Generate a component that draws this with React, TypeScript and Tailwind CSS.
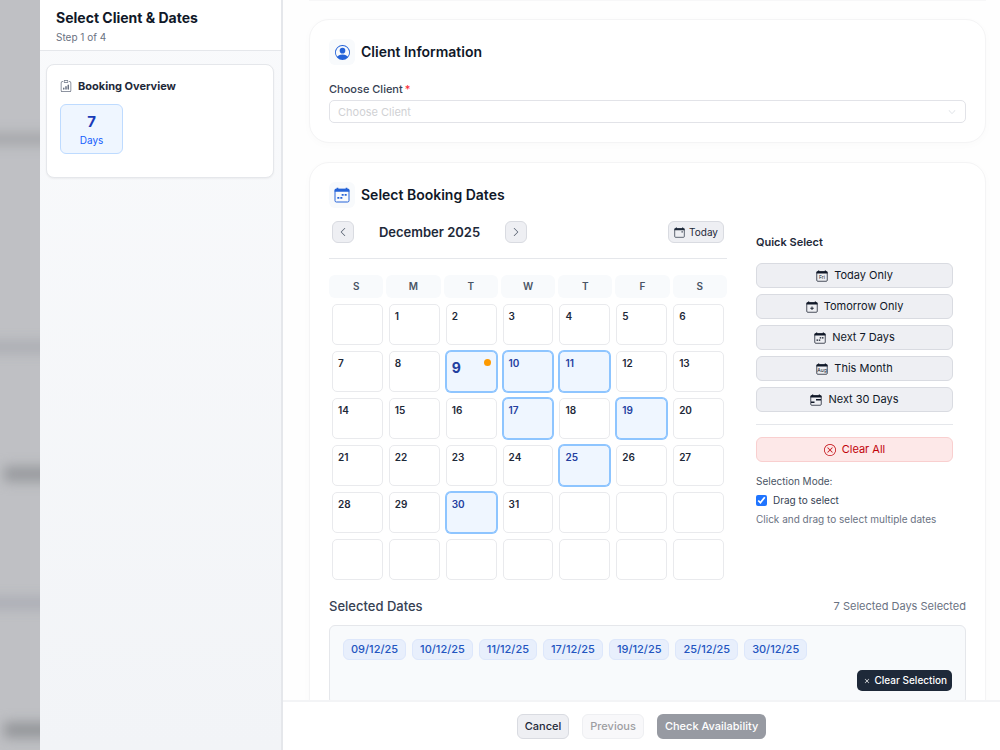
import React from "react";
import { BsPersonCircle, BsClipboardData, BsXCircle, BsChevronLeft, BsChevronRight, BsChevronDown, BsX } from "react-icons/bs";

type CalendarKind = "plain" | "range" | "plus" | "fri" | "aug" | "span";

function CalendarIcon({ kind, className }: { kind: CalendarKind; className?: string }) {
  return (
    <svg viewBox="0 0 24 24" className={className} fill="none" stroke="currentColor" strokeWidth="1.5" aria-hidden="true">
      <rect x="1.5" y="3.5" width="21" height="19" rx="2" />
      <path d="M1 4q0-1.5 1.5-1.5H4V1h2.5v1.5h11V1H20v1.5h1.5Q23 2.5 23 4v3H1z" fill="currentColor" stroke="none" />
      {kind === "plain" && <path d="M16.5 9.5h2.5v2.5h-2.5z" fill="currentColor" stroke="none" />}
      {kind === "range" && (
        <path d="M5 15h3v2.6H5zM9.5 15h3v2.6h-3zM11.5 10.5h3v2.6h-3zM16 10.5h3v2.6h-3z" fill="currentColor" stroke="none" />
      )}
      {kind === "plus" && <path d="M12 11v7M8.5 14.5h7" strokeWidth="1.8" />}
      {kind === "span" && <path d="M2 16.5h7M12 11.5h10" strokeWidth="2.6" />}
      {kind === "fri" && (
        <text x="12" y="18.5" textAnchor="middle" fontSize="10" fontFamily="Inter, sans-serif" fill="currentColor" stroke="none">Fri</text>
      )}
      {kind === "aug" && (
        <text x="12" y="18" textAnchor="middle" fontSize="10" fontFamily="Inter, sans-serif" fill="currentColor" stroke="none">Aug</text>
      )}
    </svg>
  );
}

const weekdays = ["S", "M", "T", "W", "T", "F", "S"];
const cells: (number | null)[] = Array.from({ length: 42 }, (_, i) => (i >= 1 && i <= 31 ? i : null));
const selected = new Set([9, 10, 11, 17, 19, 25, 30]);
const today = 9;

const quickOptions: { label: string; kind: CalendarKind }[] = [
  { label: "Today Only", kind: "fri" },
  { label: "Tomorrow Only", kind: "plus" },
  { label: "Next 7 Days", kind: "range" },
  { label: "This Month", kind: "aug" },
  { label: "Next 30 Days", kind: "span" },
];

function Backdrop() {
  return (
    <div className="relative w-10 shrink-0 overflow-hidden bg-[#bfc0c4]" aria-hidden="true">
      <div className="absolute -left-4 top-[133px] h-3 w-20 bg-[#a5a6aa] blur-[6px]" />
      <div className="absolute -left-4 top-[341px] h-3 w-20 bg-[#abadb3] blur-[6px]" />
      <div className="absolute left-1 top-[466px] h-4 w-16 bg-[#999b9f] blur-[6px]" />
      <div className="absolute -left-4 top-[597px] h-3 w-20 bg-[#abadb5] blur-[6px]" />
      <div className="absolute left-1 top-[722px] h-4 w-16 bg-[#95979b] blur-[6px]" />
    </div>
  );
}

function Sidebar() {
  return (
    <aside className="flex w-[243px] shrink-0 flex-col border-r-2 border-gray-200 bg-linear-to-b from-[#f9fafc] to-[#f2f4f7]">
      <header className="border-b border-gray-200 bg-white px-4 pt-2 pb-[5px]">
        <h1 className="text-[14px] leading-5 font-bold text-gray-900">Select Client &amp; Dates</h1>
        <p className="mt-px text-[10px] leading-4 text-gray-500">Step 1 of 4</p>
      </header>
      <section className="mr-[7px] ml-1.5 mt-[13px] rounded-lg border border-gray-200 bg-white px-[13px] pt-3 pb-[23px] shadow-xs">
        <h2 className="flex h-[18px] items-center gap-1.5 text-[11px] font-bold text-gray-800">
          <BsClipboardData className="size-3 text-gray-500" />
          Booking Overview
        </h2>
        <div className="mt-[9px] flex h-[50px] w-[63px] flex-col items-center justify-center rounded-md border border-blue-200 bg-blue-50 pt-px">
          <span className="text-[15px] leading-5 font-bold text-blue-800">7</span>
          <span className="text-[10px] leading-4 text-blue-600">Days</span>
        </div>
      </section>
    </aside>
  );
}

function CardTitle({ icon, children }: { icon: React.ReactNode; children: React.ReactNode }) {
  return (
    <h2 className="flex items-center gap-1.5 text-[14px] leading-5 font-semibold text-gray-900">
      <span className="flex size-[26px] items-center justify-center rounded-md bg-slate-50 text-[#2563d8]">{icon}</span>
      {children}
    </h2>
  );
}

const card = "rounded-[20px] border border-[#f4f4f5] bg-white px-[19px] pt-[19px] shadow-[0_2px_8px_rgba(0,0,0,0.02)]";
const softButton = "flex items-center justify-center rounded-md border border-[#d9dbe1] bg-[#eeeff3]";

function ClientCard() {
  return (
    <section className={`${card} pb-[19px]`}>
      <CardTitle icon={<BsPersonCircle className="size-[15px]" />}>Client Information</CardTitle>
      <label htmlFor="client" className="mt-4 block text-[11px] leading-4 font-medium text-gray-700">
        Choose Client<span className="ml-0.5 text-red-500">*</span>
      </label>
      <div className="relative mt-[3px]">
        <select id="client" defaultValue="" className="block h-[23px] w-full appearance-none rounded-[5px] border border-[#e2e3e8] bg-white px-2 text-[11px] leading-4 text-[#d0d1d4]">
          <option value="">Choose Client</option>
        </select>
        <BsChevronDown className="pointer-events-none absolute top-2 right-2.5 size-2 text-gray-300" />
      </div>
    </section>
  );
}

function Calendar() {
  return (
    <div className="min-w-0 flex-1">
      <div className="flex h-[45px] items-start justify-between border-b border-gray-200 px-[3px] pt-[7px]">
        <div className="flex items-center">
          <button type="button" aria-label="Previous month" className={`${softButton} size-[22px] text-gray-600`}>
            <BsChevronLeft className="size-2.5" />
          </button>
          <span className="w-[151px] text-center text-[13px] leading-5 font-semibold text-gray-800">December 2025</span>
          <button type="button" aria-label="Next month" className={`${softButton} size-[22px] text-gray-600`}>
            <BsChevronRight className="size-2.5" />
          </button>
        </div>
        <button type="button" className={`${softButton} h-[22px] gap-1 px-[5px] text-[10px] text-gray-800`}>
          <CalendarIcon kind="plain" className="size-[11px]" />
          Today
        </button>
      </div>
      <div className="mt-4 grid grid-cols-7 gap-[3px]">
        {weekdays.map((day, i) => (
          <div key={i} className="rounded-md bg-slate-50 text-center text-[10px] leading-[23px] font-semibold text-gray-600">{day}</div>
        ))}
      </div>
      <div className="mt-1.5 grid grid-cols-7 gap-1.5 px-[3px]">
        {cells.map((day, i) => {
          const isSelected = day !== null && selected.has(day);
          const isToday = day === today;
          const tone = isSelected
            ? "border-blue-300 bg-blue-50 text-[#23409f] ring-1 ring-blue-300"
            : "border-[#e9eaed] bg-white text-gray-800";
          return (
            <button key={i} type="button" disabled={day === null} className={`flex h-[41px] items-start justify-between rounded-[5px] border px-[5px] pt-[3px] text-left font-semibold ${tone}`}>
              <span className={isToday ? "pt-[3px] text-[14px] leading-5 font-bold" : "text-[10px] leading-4"}>{day}</span>
              {isToday && <span className="mt-1 size-[7px] rounded-full bg-amber-500" />}
            </button>
          );
        })}
      </div>
    </div>
  );
}

function QuickSelect() {
  return (
    <div className="w-[223px] shrink-0 px-[13px] pt-5">
      <h3 className="text-[11px] leading-4 font-semibold text-gray-800">Quick Select</h3>
      <div className="mt-[13px] flex flex-col gap-1.5 border-b border-gray-200 pb-3">
        {quickOptions.map(({ label, kind }) => (
          <button key={label} type="button" className={`${softButton} h-[25px] gap-1.5 text-[11px] text-gray-900`}>
            <CalendarIcon kind={kind} className="size-3" />
            {label}
          </button>
        ))}
      </div>
      <button type="button" className="mt-3 flex h-[25px] w-full items-center justify-center gap-1.5 rounded-md border border-[#f9cfcf] bg-[#fde8e8] text-[11px] text-red-700">
        <BsXCircle className="size-3" />
        Clear All
      </button>
      <p className="mt-[11px] text-[10px] leading-4 text-gray-600">Selection Mode:</p>
      <label className="mt-[3px] flex items-center gap-1.5 text-[10px] leading-4 text-gray-700">
        <input type="checkbox" defaultChecked className="size-[11px] accent-[#1f74ff]" />
        Drag to select
      </label>
      <p className="mt-[3px] text-[10px] leading-4 whitespace-nowrap text-gray-500">Click and drag to select multiple dates</p>
    </div>
  );
}

function SelectedDates() {
  const dates = Array.from(selected).map((d) => `${String(d).padStart(2, "0")}/12/25`);
  return (
    <div className="mt-4">
      <div className="flex items-center justify-between leading-5">
        <h3 className="text-[13px] font-medium text-gray-700">Selected Dates</h3>
        <span className="text-[11px] text-gray-500">{dates.length} Selected Days Selected</span>
      </div>
      <div className="mt-[9px] rounded-md border border-gray-200 bg-slate-50 p-[13px]">
        <ul className="flex flex-wrap gap-1.5">
          {dates.map((date) => (
            <li key={date} className="rounded-md border border-[#dde7fb] bg-[#e8effc] px-[7px] text-[11px] leading-[19px] font-medium text-[#2355c0]">{date}</li>
          ))}
        </ul>
        <div className="mt-2.5 flex justify-end">
          <button type="button" className="flex h-[21px] items-center gap-0.5 rounded-[5px] bg-gray-800 px-[5px] text-[10px] font-medium text-white">
            <BsX className="size-2.5" />
            Clear Selection
          </button>
        </div>
      </div>
    </div>
  );
}

export default function App() {
  return (
    <div className="flex h-screen overflow-hidden bg-white font-['Inter',sans-serif]">
      <Backdrop />
      <Sidebar />
      <div className="flex min-w-0 flex-1 flex-col">
        <main className="flex min-h-0 flex-1 flex-col overflow-hidden bg-[#fefefe] pr-3.5 pl-[26px]">
          <div className="h-px shrink-0 bg-[#f7f7f8]" />
          <div className="mt-[18px] flex flex-col gap-[19px]">
            <ClientCard />
            <section className={`${card} pb-5`}>
              <CardTitle icon={<CalendarIcon kind="range" className="size-4" />}>Select Booking Dates</CardTitle>
              <div className="mt-[6px] flex items-start gap-4">
                <Calendar />
                <QuickSelect />
              </div>
              <SelectedDates />
            </section>
          </div>
        </main>
        <footer className="flex shrink-0 items-center justify-center gap-[13px] border-t-2 border-gray-100 bg-white pt-3 pb-[11px] text-[11px] font-medium">
          <button type="button" className={`${softButton} h-[25px] px-[7px] text-gray-800`}>Cancel</button>
          <button type="button" disabled className="h-[25px] rounded-md border border-[#eeeff2] bg-[#f8f8fa] px-[7px] text-[#9d9ea2]">Previous</button>
          <button type="button" className="h-[25px] rounded-md bg-[#979aa2] px-2 text-white">Check Availability</button>
        </footer>
      </div>
    </div>
  );
}
